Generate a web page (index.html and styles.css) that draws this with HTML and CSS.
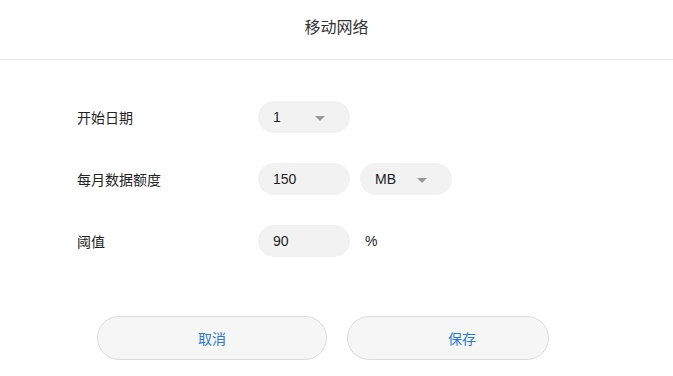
FILE: index.html
```html
<html>
<head>
	<title>移动网络</title>
	<meta charset="utf-8">
	<link rel="stylesheet" href="styles.css">
</head>
<body>
<div class="header">移动网络</div>

<div class="form">
	<div class="row">
		<div class="label">开始日期</div>
		<div class="pill select"><span>1</span><span class="arrow"></span></div>
	</div>
	<div class="row">
		<div class="label">每月数据额度</div>
		<div class="pill">150</div>
		<div class="pill select"><span>MB</span><span class="arrow"></span></div>
	</div>
	<div class="row">
		<div class="label">阈值</div>
		<div class="pill">90</div>
		<div class="unit">%</div>
	</div>
</div>

<div class="buttons">
	<a class="button cancel">取消</a>
	<a class="button save">保存</a>
</div>
</body>
</html>
```

FILE: styles.css
```css
body, html {
	margin: 0;
	background: #fff;
	font-family: "Liberation Sans", "Noto Sans CJK SC", sans-serif;
	color: #222;
}

.header {
	height: 59px;
	line-height: 56px;
	text-align: center;
	font-size: 16px;
	color: #333;
	border-bottom: 1px solid #e6e6e6;
}

.form {
	padding: 41px 0 0 77px;
	display: flex;
	flex-direction: column;
	gap: 30px;
}

.row {
	display: flex;
	align-items: center;
	gap: 10px;
	height: 32px;
}

.label {
	width: 171px;
	font-size: 14px;
}

.pill {
	box-sizing: border-box;
	width: 92px;
	height: 32px;
	border-radius: 16px;
	background: #f2f2f2;
	padding: 0 15px;
	display: flex;
	align-items: center;
	font-size: 14px;
}

.select {
	justify-content: space-between;
	padding-right: 25px;
}

.arrow {
	width: 0;
	height: 0;
	border-left: 5px solid transparent;
	border-right: 5px solid transparent;
	border-top: 5px solid #999;
	margin-top: 2px;
}

.unit {
	font-size: 14px;
	margin-left: 5px;
}

.buttons {
	display: flex;
	gap: 20px;
	padding: 59px 0 0 97px;
}

.button {
	box-sizing: border-box;
	height: 44px;
	border-radius: 22px;
	border: 1px solid #dcdcdc;
	background: #f6f6f6;
	color: #2a7ad5;
	font-size: 14px;
	display: flex;
	align-items: center;
	justify-content: center;
	cursor: pointer;
}

.cancel {
	width: 230px;
}

.save {
	width: 202px;
	padding-left: 28px;
}
```
